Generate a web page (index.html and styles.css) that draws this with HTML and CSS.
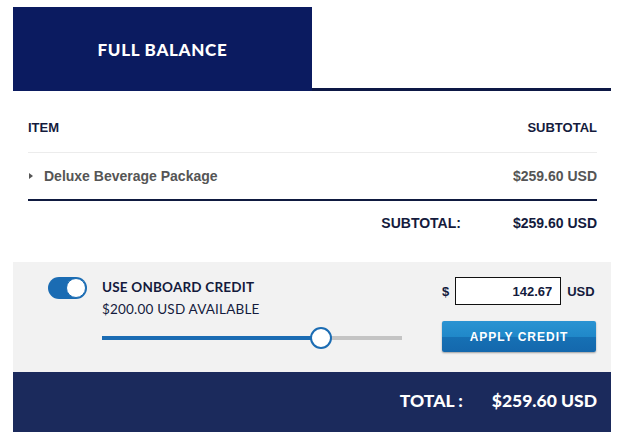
FILE: index.html
```html
<!DOCTYPE html>
<html lang="en">
<head>
    <meta charset="UTF-8">
    <meta name="viewport" content="width=device-width, initial-scale=1.0">
    <title>Full Balance</title>
    <link rel="stylesheet" href="styles.css">
</head>
<body>
    <div class="wrap">
        <div class="tabs">
            <div class="tab active">FULL BALANCE</div>
            <div class="tab-rest"></div>
        </div>

        <div class="table">
            <div class="row head">
                <span>ITEM</span>
                <span>SUBTOTAL</span>
            </div>
            <div class="row item">
                <span class="item-name"><span class="caret"></span>Deluxe Beverage Package</span>
                <span>$259.60 USD</span>
            </div>
            <div class="row subtotal">
                <span class="sub-label">SUBTOTAL:</span>
                <span>$259.60 USD</span>
            </div>
        </div>

        <div class="credit">
            <div class="toggle"><span class="knob"></span></div>
            <div class="credit-info">
                <div class="credit-title">USE ONBOARD CREDIT</div>
                <div class="credit-avail">$200.00 USD AVAILABLE</div>
                <div class="slider">
                    <div class="slider-fill" style="width: 72.7%"></div>
                    <div class="slider-thumb" style="left: 72.7%"></div>
                </div>
            </div>
            <div class="credit-apply">
                <div class="amount">
                    <span class="cur">$</span>
                    <input class="amount-input" type="text" value="142.67">
                    <span class="cur">USD</span>
                </div>
                <button class="apply-btn">APPLY CREDIT</button>
            </div>
        </div>

        <div class="total">
            <span class="total-label">TOTAL :</span>
            <span>$259.60 USD</span>
        </div>
    </div>
</body>
</html>
```

FILE: styles.css
```css
body {
    margin: 0;
    font-family: "Liberation Sans", Arial, sans-serif;
    background: #fff;
}
.wrap {
    width: 598px;
    margin: 7px 0 0 13px;
}
.tabs {
    display: flex;
}
.tab {
    width: 299px;
    height: 84px;
    display: flex;
    align-items: center;
    justify-content: center;
    background-color: #0b1b60;
    color: #fff;
    font-family: Lato, "Liberation Sans", sans-serif;
    font-weight: 900;
    font-size: 17px;
    letter-spacing: 0.7px;
}
.tab-rest {
    flex: 1;
    border-bottom: 3px solid #0d1845;
}
.table {
    padding: 0 14px 0 15px;
}
.row {
    display: flex;
    justify-content: space-between;
    align-items: center;
    font-weight: bold;
    font-size: 14px;
    line-height: 14px;
}
.head {
    padding: 30px 0 17px;
    color: #141b3d;
    font-size: 13px;
    border-bottom: 1px solid #ececec;
}
.item {
    height: 46px;
    color: #555;
    border-bottom: 2px solid #0f1a40;
}
.item-name {
    display: flex;
    align-items: center;
}
.caret {
    width: 0;
    height: 0;
    border-top: 3.5px solid transparent;
    border-bottom: 3.5px solid transparent;
    border-left: 4px solid #555;
    margin: 0 11px 0 1px;
}
.subtotal {
    height: 44px;
    color: #141b3d;
    justify-content: flex-end;
}
.sub-label {
    margin-right: 52px;
}
.credit {
    margin-top: 17px;
    height: 110px;
    box-sizing: border-box;
    padding: 15px 15px 0 35px;
    background-color: #f2f2f2;
    display: flex;
    align-items: flex-start;
}
.toggle {
    width: 39px;
    height: 22px;
    border-radius: 11px;
    background-color: #1b6cb3;
    position: relative;
    margin-right: 15px;
}
.knob {
    position: absolute;
    right: 1px;
    top: 1px;
    width: 18px;
    height: 18px;
    border-radius: 50%;
    background: #fff;
    border: 1px solid #1b6cb3;
}
.credit-info {
    width: 300px;
    color: #141b3d;
    font-family: Lato, "Liberation Sans", sans-serif;
}
.credit-title {
    font-weight: bold;
    font-size: 13.5px;
    letter-spacing: 0.2px;
    line-height: 16px;
    margin-top: 2px;
}
.credit-avail {
    font-size: 13.5px;
    letter-spacing: 0.2px;
    line-height: 16px;
    margin-top: 6px;
}
.slider {
    position: relative;
    height: 4px;
    margin-top: 19px;
    background-color: #c4c4c4;
}
.slider-fill {
    height: 100%;
    background-color: #1b6cb3;
}
.slider-thumb {
    position: absolute;
    top: -9px;
    width: 18px;
    height: 18px;
    margin-left: -10px;
    border-radius: 50%;
    background: #fff;
    border: 2px solid #1b6cb3;
}
.credit-apply {
    margin-left: auto;
    width: 154px;
}
.amount {
    display: flex;
    align-items: center;
    color: #141b3d;
    font-weight: bold;
    font-size: 13px;
}
.amount-input {
    width: 106px;
    height: 28px;
    box-sizing: border-box;
    margin: 0 6px 0 6px;
    padding: 0 8px;
    border: 1px solid #111;
    font-family: "Liberation Sans", Arial, sans-serif;
    font-weight: bold;
    font-size: 13px;
    color: #141b3d;
    text-align: right;
    background: #fff;
}
.apply-btn {
    display: block;
    width: 154px;
    height: 31px;
    margin-top: 16px;
    border: 0;
    border-radius: 2px;
    background: linear-gradient(#2a93d2 0%, #2088c9 50%, #1670b4 52%, #1468ad 100%);
    box-shadow: 0 1px 2px rgba(0, 0, 0, 0.35);
    color: #fff;
    font-family: "Liberation Sans", Arial, sans-serif;
    font-weight: bold;
    font-size: 12px;
    letter-spacing: 1px;
    cursor: pointer;
}
.total {
    height: 60px;
    box-sizing: border-box;
    padding: 0 14px 4px 0;
    background-color: #1b2a5c;
    display: flex;
    align-items: center;
    justify-content: flex-end;
    color: #fff;
    font-family: Lato, "Liberation Sans", sans-serif;
    font-weight: 900;
    font-size: 17.5px;
}
.total-label {
    margin-right: 29px;
}
```
